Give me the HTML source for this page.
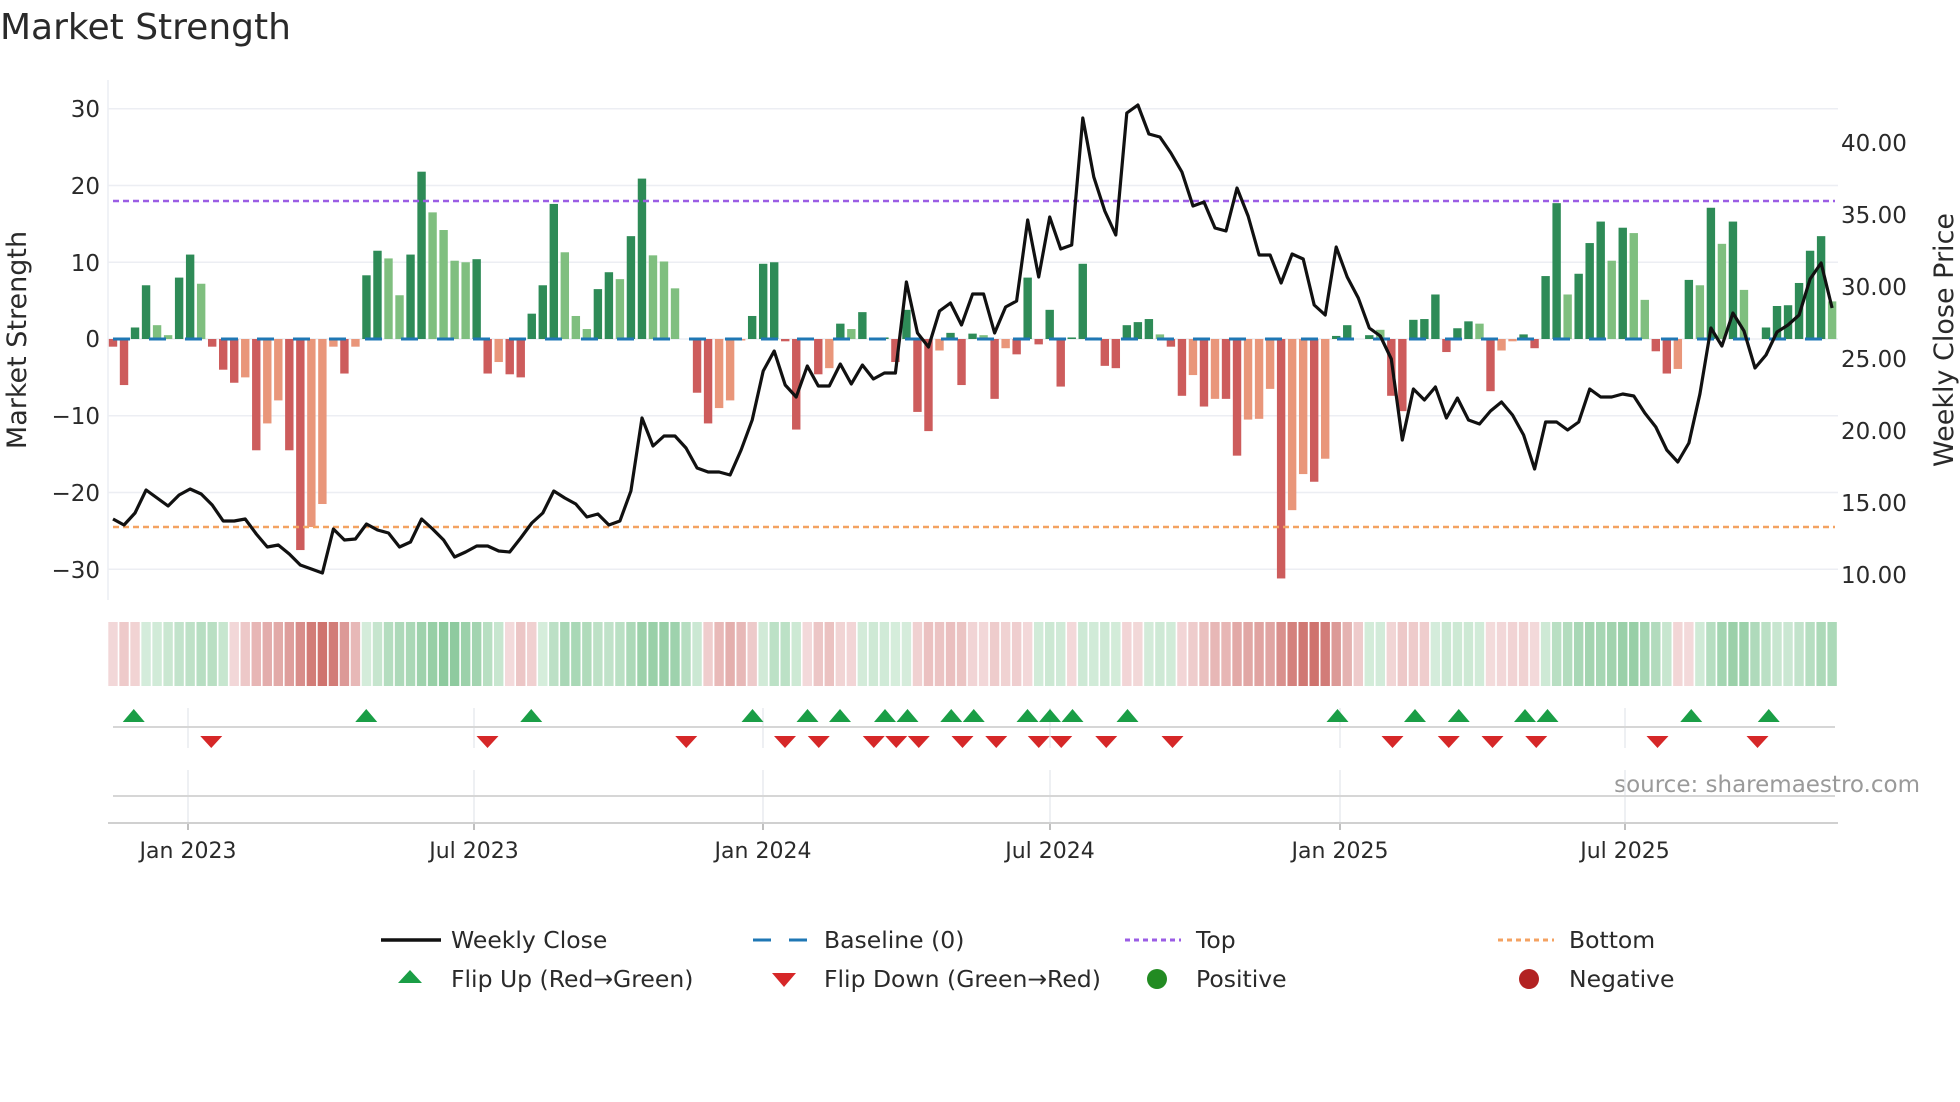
<!DOCTYPE html>
<html><head><meta charset="utf-8">
<style>
html,body{margin:0;padding:0;background:#fff;}
body{width:1960px;height:1102px;overflow:hidden;position:relative;font-family:"DejaVu Sans","Liberation Sans",sans-serif;color:#2a2a2a;}
svg{position:absolute;left:0;top:0;}
svg text{font-family:"DejaVu Sans","Liberation Sans",sans-serif;fill:#2a2a2a;}
</style></head>
<body>
<svg id="s" width="1960" height="1102" viewBox="0 0 1960 1102">
<text x="0" y="39" font-size="36">Market Strength</text>
<g font-size="23" text-anchor="end">
<text x="100" y="117">30</text>
<text x="100" y="194">20</text>
<text x="100" y="271">10</text>
<text x="100" y="347">0</text>
<text x="100" y="424">−10</text>
<text x="100" y="501">−20</text>
<text x="100" y="578">−30</text>
</g>
<g font-size="23">
<text x="1841" y="151">40.00</text>
<text x="1841" y="223">35.00</text>
<text x="1841" y="295">30.00</text>
<text x="1841" y="367">25.00</text>
<text x="1841" y="439">20.00</text>
<text x="1841" y="511">15.00</text>
<text x="1841" y="583">10.00</text>
</g>
<text transform="translate(26,340) rotate(-90)" font-size="27" text-anchor="middle">Market Strength</text>
<text transform="translate(1953,340) rotate(-90)" font-size="27" text-anchor="middle">Weekly Close Price</text>
<g font-size="22" text-anchor="middle">
<text x="188" y="858">Jan 2023</text>
<text x="474" y="858">Jul 2023</text>
<text x="763" y="858">Jan 2024</text>
<text x="1050" y="858">Jul 2024</text>
<text x="1340" y="858">Jan 2025</text>
<text x="1625" y="858">Jul 2025</text>
</g>
<text x="1920" y="792" font-size="23" text-anchor="end" style="fill:#9a9a9a">source: sharemaestro.com</text>
<g font-size="23.5">
<text x="451" y="948">Weekly Close</text>
<text x="824" y="948">Baseline (0)</text>
<text x="1196" y="948">Top</text>
<text x="1569" y="948">Bottom</text>
<text x="451" y="987">Flip Up (Red→Green)</text>
<text x="824" y="987">Flip Down (Green→Red)</text>
<text x="1196" y="987">Positive</text>
<text x="1569" y="987">Negative</text>
</g>
<g id="dyn"></g>
</svg>
<script>
(function(){
var g=document.getElementById("dyn"),h="";
function X(i){return 113+11.02*i;}
function Y(v){return 339-v*7.675;}
[30,20,10,0,-10,-20,-30].forEach(function(v){h+='<line x1="108" x2="1838" y1="'+Y(v)+'" y2="'+Y(v)+'" stroke="#eceef3" stroke-width="1.5"/>';});
h+='<line x1="108" x2="108" y1="80" y2="600" stroke="#eceef3" stroke-width="1.5"/>';
var vals="-1d,-6d,1.5d,7d,1.8l,0.5l,8d,11d,7.2l,-1d,-4d,-5.7d,-5l,-14.5d,-11l,-8l,-14.5d,-27.5d,-24.5l,-21.5l,-1l,-4.5d,-1l,8.3d,11.5d,10.5l,5.7l,11d,21.8d,16.5l,14.2l,10.2l,10l,10.4d,-4.5d,-3l,-4.6d,-5d,3.3d,7d,17.6d,11.3l,3l,1.3l,6.5d,8.7d,7.8l,13.4d,20.9d,10.9l,10.1l,6.6l,0d,-7d,-11d,-9l,-8l,-0.2l,3d,9.8d,10d,-0.3d,-11.8d,0d,-4.6d,-3.8l,2d,1.3l,3.5d,0d,0.2d,-3d,3.8d,-9.5d,-12d,-1.5l,0.8d,-6d,0.7d,0.5l,-7.8d,-1.2l,-2d,8d,-0.7d,3.8d,-6.2d,0.2d,9.8d,0.2d,-3.5d,-3.8d,1.8d,2.2d,2.6d,0.6l,-1d,-7.4d,-4.7l,-8.8d,-7.8l,-7.8d,-15.2d,-10.5l,-10.4l,-6.5l,-31.2d,-22.3l,-17.6l,-18.6d,-15.6l,0.4d,1.8d,0d,0.5d,1.2l,-7.4d,-9.4d,2.5d,2.6d,5.8d,-1.7d,1.4d,2.3d,2l,-6.8d,-1.5l,-0.3l,0.6d,-1.2d,8.2d,17.7d,5.8l,8.5d,12.5d,15.3d,10.2l,14.5d,13.8l,5.1l,-1.6d,-4.5d,-3.9l,7.7d,7l,17.1d,12.4l,15.3d,6.4l,0d,1.5d,4.3d,4.4d,7.3d,11.5d,13.4d,4.9l".split(",");
var V=[],T=[];
vals.forEach(function(s){T.push(s.slice(-1));V.push(parseFloat(s));});
var N=V.length;
for(var i=0;i<N;i++){var v=V[i];if(Math.abs(v)<0.05)continue;
 var c=v>0?(T[i]=="d"?"#2e8b57":"#7fbf7f"):(T[i]=="d"?"#cd5c5c":"#e9967a");
 var y1=Math.min(Y(0),Y(v)),hh=Math.abs(Y(v)-Y(0));
 h+='<rect x="'+(X(i)-4.2)+'" y="'+y1+'" width="8.4" height="'+hh+'" fill="'+c+'"/>';}
h+='<line x1="113" x2="1835" y1="'+Y(0)+'" y2="'+Y(0)+'" stroke="#1f77b4" stroke-width="3" stroke-dasharray="17,19"/>';
h+='<line x1="113" x2="1835" y1="201" y2="201" stroke="#9b5de5" stroke-width="2.5" stroke-dasharray="6,4"/>';
h+='<line x1="113" x2="1835" y1="527" y2="527" stroke="#f4a261" stroke-width="2.5" stroke-dasharray="6,4"/>';
var P=[519,525,513,490,498,506,495,489,494,505,521,521,519,534,547,545,554,565,569,573,529,540,539,524,530,533,547,542,519,529,540,557,552,546,546,551,552,538,523,513,491,498,504,517,514,525,521,491,418,446,436,436,448,468,472,472,475,450,420,371,351,385,397,366,386,386,364,384,365,379,373,373,282,333,347,311,303,325,294,294,333,307,301,220,277,217,249,245,118,177,211,235,113,105,134,137,153,172,206,202,228,231,188,216,255,255,283,254,259,305,315,247,277,298,328,336,359,440,389,400,387,418,398,420,424,411,402,415,435,469,422,422,430,422,389,397,397,394,396,413,427,450,462,443,394,328,346,313,331,368,355,332,325,315,279,263,308];
var pts=P.map(function(y,i){return X(i).toFixed(1)+","+y;}).join(" ");
h+='<polyline points="'+pts+'" fill="none" stroke="#111" stroke-width="3.2" stroke-linejoin="round"/>';
for(var i=0;i<N;i++){var s=0,n=0;for(var k=Math.max(0,i-3);k<=i;k++){s+=V[k];n++;}var a=s/n;
 var t=Math.min(0.85,Math.abs(a)/24);var col;
 if(a>=0){col="rgb("+Math.round(214-(214-104)*t)+","+Math.round(237-(237-184)*t)+","+Math.round(220-(220-126)*t)+")";}
 else{col="rgb("+Math.round(244-(244-200)*t)+","+Math.round(220-(220-96)*t)+","+Math.round(221-(221-90)*t)+")";}
 h+='<rect x="'+(X(i)-5.5+0.8)+'" y="622" width="9.4" height="64" fill="'+col+'"/>';}
var tx=[188,474,763,1050,1340,1625];
tx.forEach(function(x){h+='<line x1="'+x+'" x2="'+x+'" y1="708" y2="748" stroke="#e8eaef" stroke-width="1.5"/><line x1="'+x+'" x2="'+x+'" y1="770" y2="822" stroke="#e8eaef" stroke-width="1.5"/><line x1="'+x+'" x2="'+x+'" y1="822" y2="830" stroke="#aaa" stroke-width="1.5"/>';});
h+='<line x1="113" x2="1835" y1="727" y2="727" stroke="#d6d6d6" stroke-width="2"/>';
h+='<line x1="113" x2="1835" y1="796" y2="796" stroke="#d6d6d6" stroke-width="2"/>';
h+='<line x1="108" x2="1838" y1="823" y2="823" stroke="#d0d0d0" stroke-width="2"/>';
var up=[107,293,425,602,646,672,708,726,761,779,822,840,858,902,1070,1132,1167,1220,1238,1353,1415];
var dn=[169,390,549,628,655,699,717,735,770,797,831,849,885,938,1114,1159,1194,1229,1326,1406];
up.forEach(function(x){x*=1.25;h+='<polygon points="'+(x-11)+',722 '+(x+11)+',722 '+x+',709" fill="#1a9e46"/>';});
dn.forEach(function(x){x*=1.25;h+='<polygon points="'+(x-11)+',736 '+(x+11)+',736 '+x+',748" fill="#d62728"/>';});
h+='<line x1="381" x2="441" y1="940" y2="940" stroke="#111" stroke-width="3.5"/>';
h+='<line x1="753" x2="771" y1="940" y2="940" stroke="#1f77b4" stroke-width="3"/><line x1="789" x2="807" y1="940" y2="940" stroke="#1f77b4" stroke-width="3"/>';
h+='<line x1="1125" x2="1181" y1="940" y2="940" stroke="#9b5de5" stroke-width="3" stroke-dasharray="5,4"/>';
h+='<line x1="1498" x2="1554" y1="940" y2="940" stroke="#f4a261" stroke-width="3" stroke-dasharray="5,4"/>';
h+='<polygon points="398,983 422,983 410,970" fill="#1a9e46"/>';
h+='<polygon points="772,973 796,973 784,987" fill="#d62728"/>';
h+='<circle cx="1157" cy="979" r="10" fill="#228b22"/>';
h+='<circle cx="1529" cy="979" r="10" fill="#b22222"/>';
g.innerHTML=h;
})();
</script>
</body></html>
